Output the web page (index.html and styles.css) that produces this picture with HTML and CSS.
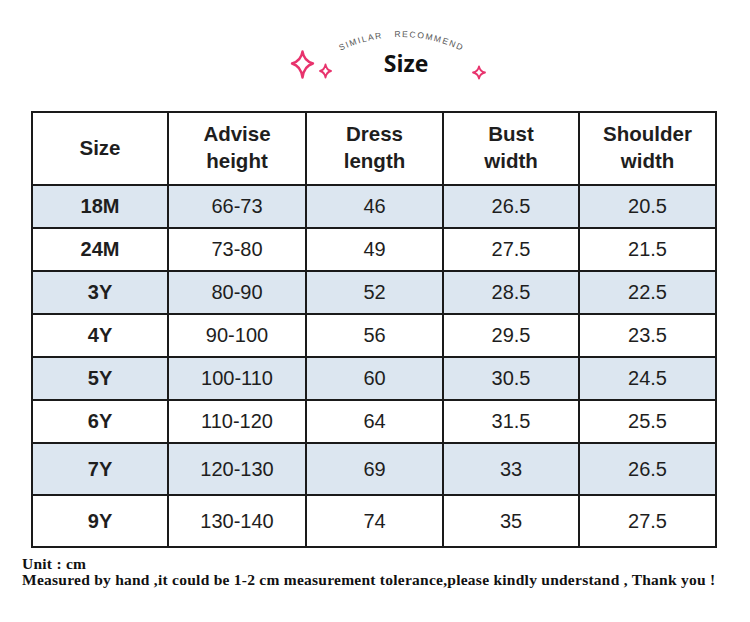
FILE: index.html
```html
<!DOCTYPE html>
<html>
<head>
<meta charset="utf-8">
<link rel="stylesheet" href="styles.css">
</head>
<body>
<header class="title">
  <svg class="title-art" width="750" height="110" viewBox="0 0 750 110" xmlns="http://www.w3.org/2000/svg">
    <defs>
      <path id="arc" d="M336,53 A140,140 0 0,1 470,55.2"/>
    </defs>
    <text class="arc-text"><textPath href="#arc" startOffset="5">SIMILAR</textPath></text>
    <text class="arc-text"><textPath href="#arc" startOffset="61">RECOM</textPath></text>
    <text class="arc-text"><textPath href="#arc" startOffset="100.1">MEND</textPath></text>
    <g class="spark">
      <path class="big" d="M302.5,51.5 Q304,61 313,63.5 Q304,66 302.5,77.5 Q301,66 292,63.5 Q301,61 302.5,51.5 Z"/>
      <path d="M325.5,64.5 Q326.5,70 331,71 Q326.5,72 325.5,77.5 Q324.5,72 320,71 Q324.5,70 325.5,64.5 Z"/>
      <path d="M479,66.5 Q480,71.5 485,72.5 Q480,73.5 479,78.5 Q478,73.5 473,72.5 Q478,71.5 479,66.5 Z"/>
    </g>
    <text class="size-title" x="406" y="72" text-anchor="middle">Size</text>
  </svg>
</header>
<table class="chart">
  <colgroup>
    <col class="c1"><col class="c2"><col class="c3"><col class="c4"><col class="c5">
  </colgroup>
  <thead>
    <tr class="head">
      <th>Size</th><th>Advise<br>height</th><th>Dress<br>length</th><th>Bust<br>width</th><th>Shoulder<br>width</th>
    </tr>
  </thead>
  <tbody>
    <tr class="blue"><th>18M</th><td>66-73</td><td>46</td><td>26.5</td><td>20.5</td></tr>
    <tr><th>24M</th><td>73-80</td><td>49</td><td>27.5</td><td>21.5</td></tr>
    <tr class="blue"><th>3Y</th><td>80-90</td><td>52</td><td>28.5</td><td>22.5</td></tr>
    <tr><th>4Y</th><td>90-100</td><td>56</td><td>29.5</td><td>23.5</td></tr>
    <tr class="blue"><th>5Y</th><td>100-110</td><td>60</td><td>30.5</td><td>24.5</td></tr>
    <tr><th>6Y</th><td>110-120</td><td>64</td><td>31.5</td><td>25.5</td></tr>
    <tr class="blue tall"><th>7Y</th><td>120-130</td><td>69</td><td>33</td><td>26.5</td></tr>
    <tr class="tall"><th>9Y</th><td>130-140</td><td>74</td><td>35</td><td>27.5</td></tr>
  </tbody>
</table>
<div class="notes">
  <p>Unit : cm</p>
  <p>Measured by hand ,it could be 1-2 cm measurement tolerance,please kindly understand , Thank you !</p>
</div>
</body>
</html>
```
FILE: styles.css
```css
html, body {
  margin: 0;
  padding: 0;
  background: #ffffff;
}
body {
  width: 750px;
  height: 622px;
  overflow: hidden;
}
.title {
  height: 110px;
}
.title-art {
  display: block;
}
.arc-text {
  font-family: "Liberation Sans", Arial, sans-serif;
  font-size: 8.5px;
  letter-spacing: 1.5px;
  fill: #555555;
}
.spark path {
  fill: none;
  stroke: #e8336d;
  stroke-width: 1.8;
  stroke-linejoin: round;
}
.spark path.big {
  stroke-width: 2.4;
}
.size-title {
  font-family: "Open Sans", "Noto Sans", sans-serif;
  font-weight: 700;
  font-size: 23px;
  fill: #111111;
}
.chart {
  margin-left: 31px;
  margin-top: 1px;
  width: 684px;
  border-collapse: collapse;
  table-layout: fixed;
  font-family: "Liberation Sans", Arial, sans-serif;
  color: #1e1e1e;
}
.c1 { width: 136px; }
.c2 { width: 138px; }
.c3 { width: 137px; }
.c4 { width: 136px; }
.c5 { width: 137px; }
.chart th, .chart td {
  border: 2px solid #1a1a1a;
  text-align: center;
  vertical-align: middle;
  padding: 0;
  font-size: 20px;
}
.chart th {
  font-weight: 700;
}
.chart td {
  font-weight: 400;
}
.head th {
  height: 68px;
  line-height: 27px;
  font-size: 20.5px;
  padding-bottom: 3px;
}
.chart tbody tr th,
.chart tbody tr td {
  height: 41px;
}
.chart tbody tr.tall th,
.chart tbody tr.tall td {
  height: 50px;
}
.blue th, .blue td {
  background: #dce6f0;
}
.notes {
  margin: 8px 0 0 22px;
  font-family: "Liberation Serif", "Times New Roman", serif;
  font-weight: 700;
  font-size: 15.5px;
  line-height: 16px;
  letter-spacing: 0.25px;
  color: #111111;
}
.notes p {
  margin: 0;
  white-space: nowrap;
}
```
